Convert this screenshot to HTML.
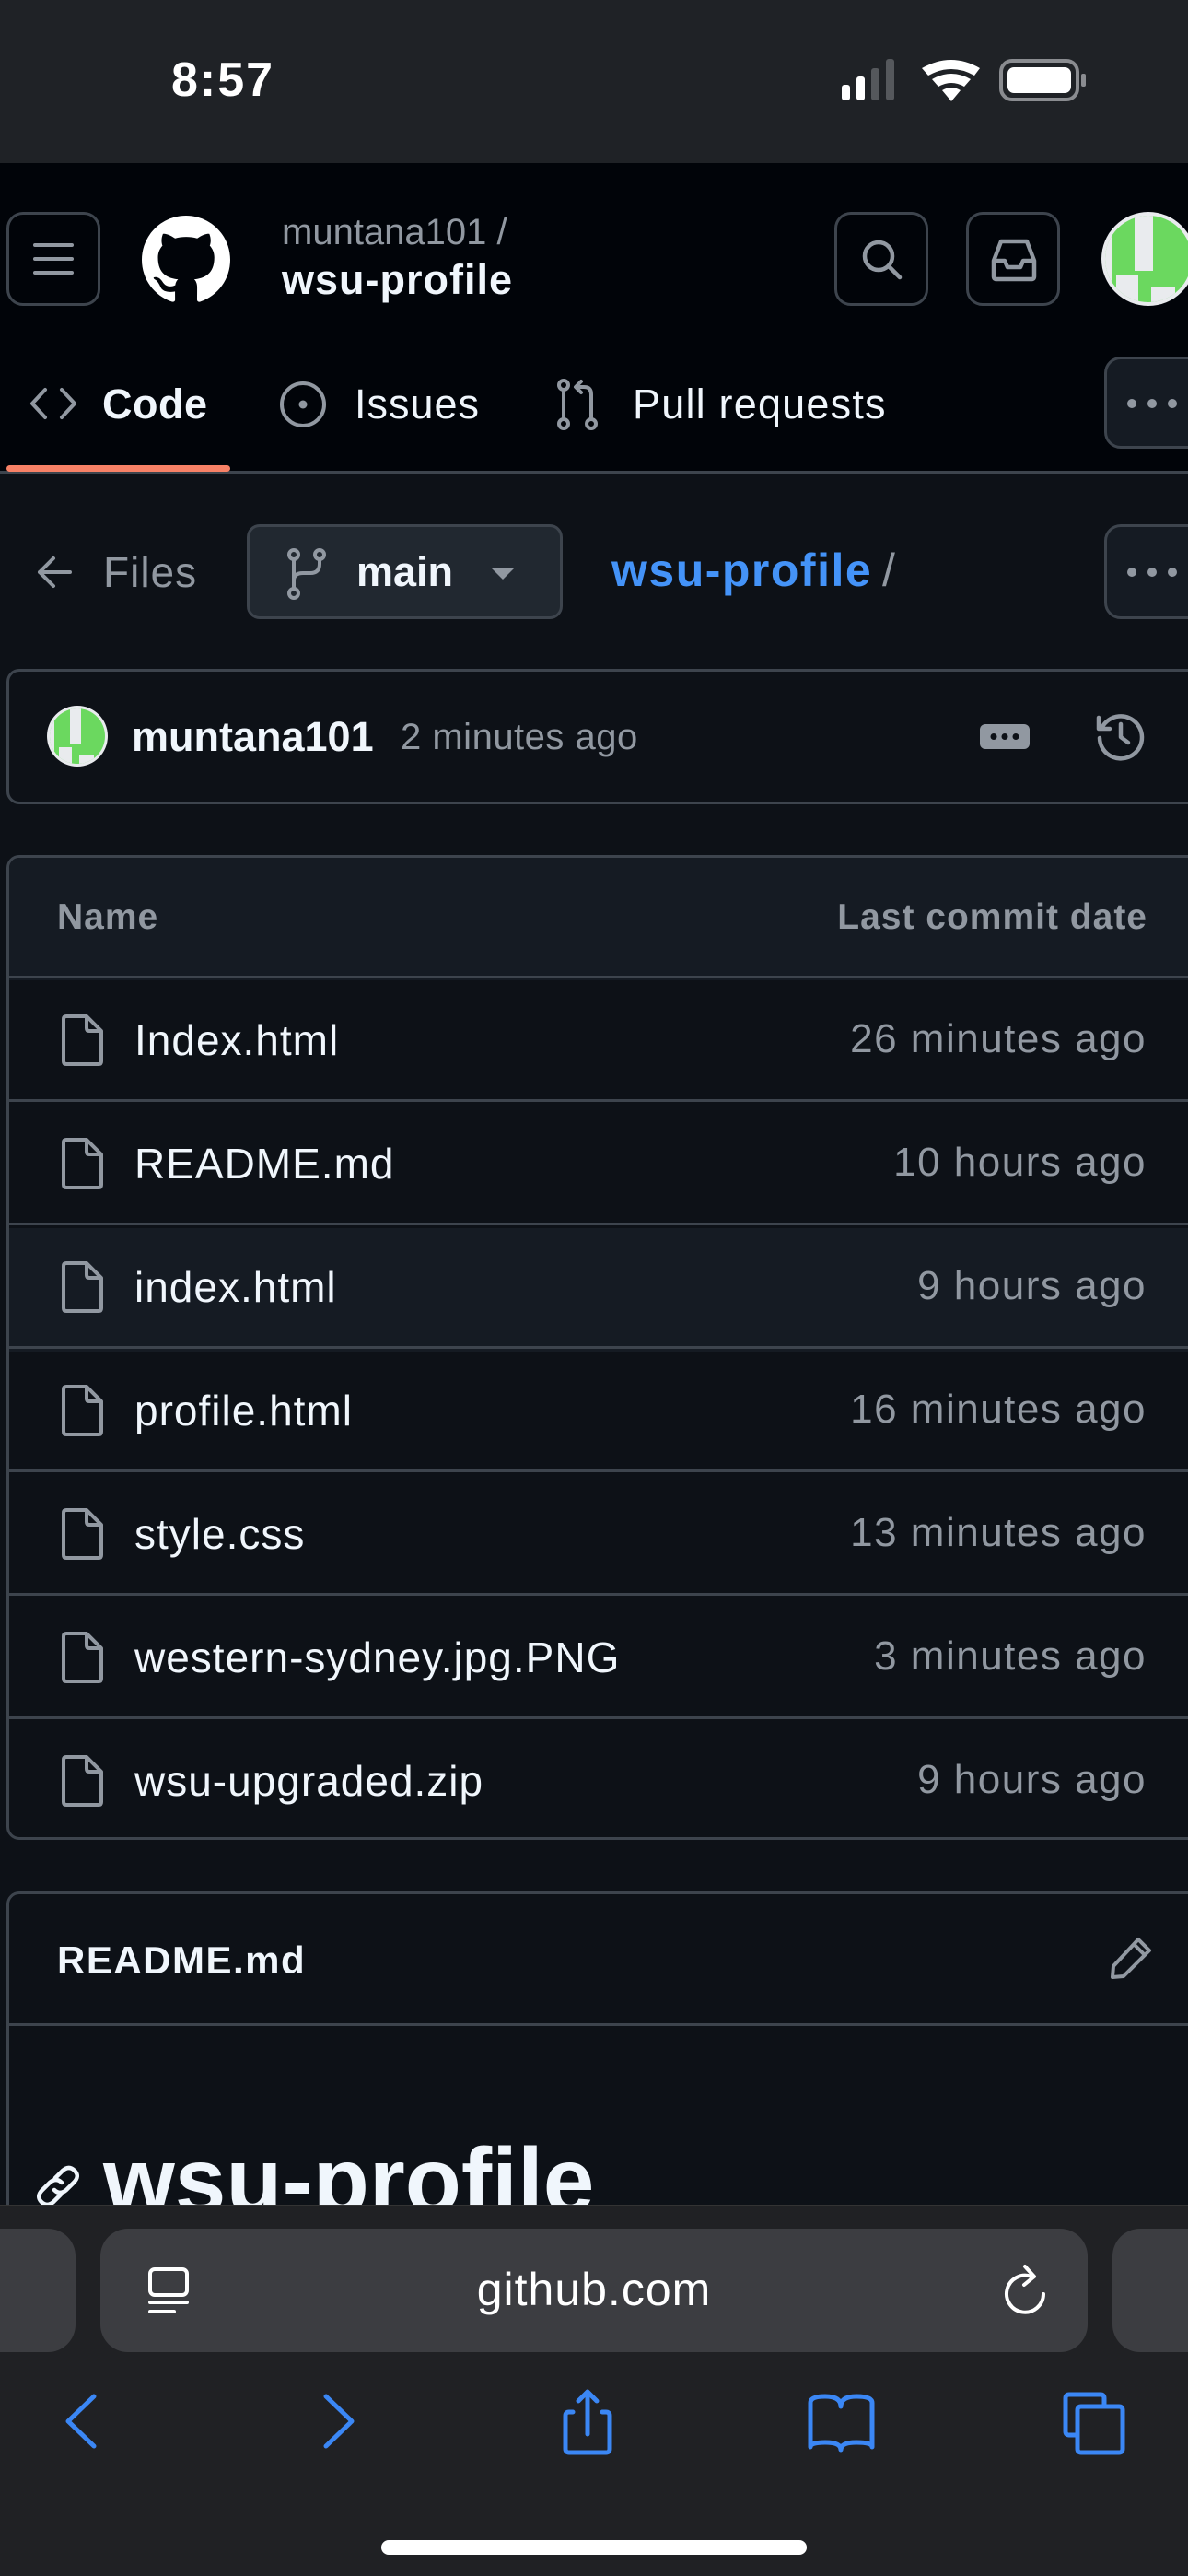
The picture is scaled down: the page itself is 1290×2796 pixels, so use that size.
<!DOCTYPE html>
<html><head><meta charset="utf-8">
<style>
*{margin:0;padding:0;box-sizing:border-box}
body{width:1290px;height:2796px;background:#0d1117;font-family:"Liberation Sans",sans-serif;color:#f0f6fc;position:relative;overflow:hidden}
.a{position:absolute}
.btn{position:absolute;border:3px solid #3d444d;border-radius:18px}
.row{position:absolute;left:7px;width:1290px;height:134px;border-top:3px solid #3d444d}
.fn{position:absolute;left:139px;top:40px;font-size:46px;letter-spacing:1px;color:#f0f6fc}
.dt{position:absolute;right:52px;top:41px;font-size:44px;letter-spacing:1.5px;color:#9198a1}
.fi{position:absolute;left:59px;top:38px}
</style></head><body>
<!-- status bar -->
<div class="a" style="left:0;top:0;width:1290px;height:177px;background:#1f2226"></div>
<div class="a" style="left:186px;top:57px;font-size:52px;letter-spacing:2px;font-weight:bold;color:#fff">8:57</div>
<svg class="a" style="left:912px;top:64px" width="270" height="46" viewBox="0 0 270 46">
<rect x="2" y="28" width="9" height="17" rx="3" fill="#fff"/>
<rect x="18" y="19" width="9" height="26" rx="3" fill="#fff"/>
<rect x="34" y="10" width="9" height="35" rx="3" fill="#55585c"/>
<rect x="50" y="0" width="9" height="45" rx="3" fill="#55585c"/>
<path d="M89 10 Q121 -8 152 10 L146 18 Q121 4 96 18Z M100 22 Q121 10 142 22 L135 30 Q121 22 107 30Z M111 34 Q121 28 131 34 L121 46Z" fill="#fff"/>
<rect x="175" y="2" width="83" height="42" rx="12" fill="none" stroke="#8a8c90" stroke-width="4"/>
<rect x="182" y="9" width="69" height="28" rx="7" fill="#fff"/>
<rect x="262" y="16" width="5" height="14" rx="2" fill="#8a8c90"/>
</svg>

<!-- header -->
<div class="a" style="left:0;top:177px;width:1290px;height:337px;background:#010409;border-bottom:3px solid #3d444d"></div>
<div class="btn" style="left:7px;top:230px;width:102px;height:102px">
<svg class="a" style="left:25px;top:29px" width="46" height="38"><rect x="1" y="2" width="44" height="4" rx="2" fill="#9198a1"/><rect x="1" y="17" width="44" height="4" rx="2" fill="#9198a1"/><rect x="1" y="32" width="44" height="4" rx="2" fill="#9198a1"/></svg>
</div>
<svg class="a" style="left:154px;top:234px" width="96" height="96" viewBox="0 0 16 16"><path fill="#fff" d="M8 0C3.580 0 0 3.58 0 8c0 3.54 2.29 6.530 5.47 7.59.4.07.55-.17.55-.38 0-.19-.01-.82-.01-1.49-2.01.37-2.530-.49-2.69-.94-.09-.23-.48-.94-.82-1.13-.28-.15-.68-.52-.01-.53.63-.01 1.08.58 1.23.82.72 1.21 1.87.87 2.33.66.07-.52.28-.87.51-1.07-1.78-.2-3.64-.89-3.64-3.95 0-.87.31-1.59.82-2.15-.08-.2-.36-1.02.08-2.12 0 0 .67-.21 2.2.82.64-.18 1.32-.27 2-.27.68 0 1.36.09 2 .27 1.53-1.04 2.2-.82 2.2-.82.44 1.1.16 1.92.08 2.12.51.56.82 1.27.82 2.15 0 3.07-1.87 3.75-3.65 3.95.29.25.54.73.54 1.48 0 1.07-.01 1.93-.01 2.2 0 .21.15.46.55.38A8.013 8.013 0 0016 8c0-4.42-3.58-8-8-8z"/></svg>
<div class="a" style="left:306px;top:230px;font-size:40px;color:#9198a1">muntana101 /</div>
<div class="a" style="left:306px;top:278px;font-size:45px;letter-spacing:1px;font-weight:bold;color:#f0f6fc">wsu-profile</div>
<div class="btn" style="left:906px;top:230px;width:102px;height:102px">
<svg class="a" style="left:24px;top:24px" width="50" height="50" viewBox="0 0 50 50"><circle cx="21" cy="21" r="15" fill="none" stroke="#9198a1" stroke-width="4.5"/><path d="M32 32 L44 44" stroke="#9198a1" stroke-width="4.5" stroke-linecap="round"/></svg>
</div>
<div class="btn" style="left:1049px;top:230px;width:102px;height:102px">
<svg class="a" style="left:23px;top:24px" width="52" height="50" viewBox="0 0 52 50"><path d="M12 5 H40 L48 26 V43 Q48 46 45 46 H7 Q4 46 4 43 V26 Z" fill="none" stroke="#9198a1" stroke-width="4.5" stroke-linejoin="round"/><path d="M4 26 H16 L19 33 H33 L36 26 H48" fill="none" stroke="#9198a1" stroke-width="4.5" stroke-linejoin="round"/></svg>
</div>
<svg class="a" style="left:1192px;top:228px" width="110" height="106" viewBox="0 0 110 106"><circle cx="55" cy="53" r="51" fill="#e9ebee"/><clipPath id="c1"><circle cx="55" cy="53" r="47"/></clipPath><g clip-path="url(#c1)"><rect x="0" y="0" width="110" height="106" fill="#6bd85f"/><rect x="0" y="0" width="16" height="106" fill="#e9ebee"/><rect x="40" y="0" width="20" height="66" fill="#e9ebee"/><rect x="20" y="70" width="24" height="40" fill="#e9ebee"/><rect x="58" y="84" width="26" height="26" fill="#e9ebee"/></g></svg>

<!-- tabs -->
<svg class="a" style="left:32px;top:420px" width="52" height="36" viewBox="0 0 52 36"><path d="M17 3 L3 18 L17 33 M35 3 L49 18 L35 33" fill="none" stroke="#9198a1" stroke-width="4" stroke-linecap="round" stroke-linejoin="round"/></svg>
<div class="a" style="left:111px;top:413px;font-size:45px;letter-spacing:0.5px;font-weight:bold">Code</div>
<svg class="a" style="left:302px;top:412px" width="54" height="54" viewBox="0 0 54 54"><circle cx="27" cy="27" r="23" fill="none" stroke="#9198a1" stroke-width="4"/><circle cx="27" cy="27" r="4.5" fill="#9198a1"/></svg>
<div class="a" style="left:385px;top:413px;font-size:45px;letter-spacing:1px">Issues</div>
<svg class="a" style="left:604px;top:410px" width="46" height="58" viewBox="0 0 46 58"><circle cx="8" cy="8" r="5" fill="none" stroke="#9198a1" stroke-width="4"/><circle cx="8" cy="50" r="5" fill="none" stroke="#9198a1" stroke-width="4"/><circle cx="38" cy="50" r="5" fill="none" stroke="#9198a1" stroke-width="4"/><path d="M8 13 V45 M38 45 V18 Q38 10 30 10 H22 M27 4 L21 10 L27 16" fill="none" stroke="#9198a1" stroke-width="4" stroke-linecap="round" stroke-linejoin="round"/></svg>
<div class="a" style="left:687px;top:413px;font-size:45px;letter-spacing:1.2px">Pull requests</div>
<div class="btn" style="left:1199px;top:387px;width:110px;height:100px;background:#151b23">
<svg class="a" style="left:20px;top:41px" width="60" height="14"><circle cx="7" cy="7" r="5" fill="#9198a1"/><circle cx="29" cy="7" r="5" fill="#9198a1"/><circle cx="51" cy="7" r="5" fill="#9198a1"/></svg>
</div>
<div class="a" style="left:7px;top:505px;width:243px;height:7px;border-radius:4px;background:#f78166"></div>

<!-- files row -->
<svg class="a" style="left:38px;top:602px" width="42" height="38" viewBox="0 0 42 38"><path d="M20 4 L5 19 L20 34 M5 19 H38" fill="none" stroke="#9198a1" stroke-width="4" stroke-linecap="round" stroke-linejoin="round"/></svg>
<div class="a" style="left:112px;top:594px;font-size:46px;letter-spacing:1px;color:#9198a1">Files</div>
<div class="btn" style="left:268px;top:569px;width:343px;height:103px;background:#212830;border-radius:14px">
<svg class="a" style="left:40px;top:22px" width="44" height="58" viewBox="0 0 44 58"><circle cx="8" cy="8" r="5" fill="none" stroke="#9198a1" stroke-width="4"/><circle cx="36" cy="8" r="5" fill="none" stroke="#9198a1" stroke-width="4"/><circle cx="8" cy="50" r="5" fill="none" stroke="#9198a1" stroke-width="4"/><path d="M8 13 V45 M36 13 V18 Q36 28 26 28 H18 Q8 28 8 36" fill="none" stroke="#9198a1" stroke-width="4"/></svg>
<div class="a" style="left:116px;top:23px;font-size:45px;font-weight:bold">main</div>
<svg class="a" style="left:262px;top:44px" width="26" height="14"><path d="M0 0 H26 L13 13Z" fill="#9198a1"/></svg>
</div>
<div class="a" style="left:664px;top:590px;font-size:50px;letter-spacing:1.5px;font-weight:bold;color:#4493f8">wsu-profile</div>
<div class="a" style="left:958px;top:590px;font-size:50px;color:#9198a1">/</div>
<div class="btn" style="left:1199px;top:569px;width:110px;height:103px;background:#151b23">
<svg class="a" style="left:20px;top:42px" width="60" height="14"><circle cx="7" cy="7" r="5" fill="#9198a1"/><circle cx="29" cy="7" r="5" fill="#9198a1"/><circle cx="51" cy="7" r="5" fill="#9198a1"/></svg>
</div>

<!-- commit box -->
<div class="btn" style="left:7px;top:726px;width:1300px;height:147px;border-radius:14px"></div>
<svg class="a" style="left:50px;top:765px" width="68" height="68" viewBox="0 0 68 68"><circle cx="34" cy="34" r="33" fill="#e9ebee"/><clipPath id="c2"><circle cx="34" cy="34" r="30"/></clipPath><g clip-path="url(#c2)"><rect width="68" height="68" fill="#6bd85f"/><rect x="0" y="0" width="9" height="68" fill="#e9ebee"/><rect x="26" y="0" width="12" height="42" fill="#e9ebee"/><rect x="14" y="46" width="14" height="24" fill="#e9ebee"/><rect x="36" y="54" width="16" height="16" fill="#e9ebee"/></g></svg>
<div class="a" style="left:143px;top:774px;font-size:45px;font-weight:bold">muntana101</div>
<div class="a" style="left:435px;top:778px;font-size:40px;letter-spacing:0.5px;color:#9198a1">2 minutes ago</div>
<svg class="a" style="left:1064px;top:786px" width="54" height="27"><rect width="54" height="27" rx="6" fill="#9198a1"/><circle cx="15" cy="13.5" r="3.5" fill="#0d1117"/><circle cx="27" cy="13.5" r="3.5" fill="#0d1117"/><circle cx="39" cy="13.5" r="3.5" fill="#0d1117"/></svg>
<svg class="a" style="left:1189px;top:771px" width="56" height="56" viewBox="0 0 56 56"><path d="M8 18 A23 23 0 1 1 5 30" fill="none" stroke="#9198a1" stroke-width="4.5" stroke-linecap="round"/><path d="M4 8 V20 H16" fill="none" stroke="#9198a1" stroke-width="4.5" stroke-linecap="round" stroke-linejoin="round"/><path d="M28 15 V29 L36 35" fill="none" stroke="#9198a1" stroke-width="4.5" stroke-linecap="round" stroke-linejoin="round"/></svg>

<!-- file table -->
<div class="btn" style="left:7px;top:928px;width:1300px;height:1069px;border-radius:14px;overflow:hidden">
<div class="a" style="left:0;top:0;width:1300px;height:133px;background:#151b23"></div>
<div class="a" style="left:0;top:402px;width:1300px;height:134px;background:#151b23"></div>
</div>
<div class="a" style="left:62px;top:974px;font-size:39px;letter-spacing:1px;font-weight:bold;color:#9198a1">Name</div>
<div class="a" style="right:44px;top:974px;font-size:39px;letter-spacing:1px;font-weight:bold;color:#9198a1">Last commit date</div>

<div class="row" style="top:1059px"><svg class="fi" width="48" height="58" viewBox="0 0 48 58"><path d="M6 3 H28 L44 19 V52 Q44 55 41 55 H6 Q3 55 3 52 V6 Q3 3 6 3Z M28 3 V16 Q28 19 31 19 H44" fill="none" stroke="#9198a1" stroke-width="4" stroke-linejoin="round"/></svg><div class="fn">Index.html</div><div class="dt">26 minutes ago</div></div>
<div class="row" style="top:1193px"><svg class="fi" width="48" height="58" viewBox="0 0 48 58"><path d="M6 3 H28 L44 19 V52 Q44 55 41 55 H6 Q3 55 3 52 V6 Q3 3 6 3Z M28 3 V16 Q28 19 31 19 H44" fill="none" stroke="#9198a1" stroke-width="4" stroke-linejoin="round"/></svg><div class="fn">README.md</div><div class="dt">10 hours ago</div></div>
<div class="row" style="top:1327px"><svg class="fi" width="48" height="58" viewBox="0 0 48 58"><path d="M6 3 H28 L44 19 V52 Q44 55 41 55 H6 Q3 55 3 52 V6 Q3 3 6 3Z M28 3 V16 Q28 19 31 19 H44" fill="none" stroke="#9198a1" stroke-width="4" stroke-linejoin="round"/></svg><div class="fn">index.html</div><div class="dt">9 hours ago</div></div>
<div class="row" style="top:1461px"><svg class="fi" width="48" height="58" viewBox="0 0 48 58"><path d="M6 3 H28 L44 19 V52 Q44 55 41 55 H6 Q3 55 3 52 V6 Q3 3 6 3Z M28 3 V16 Q28 19 31 19 H44" fill="none" stroke="#9198a1" stroke-width="4" stroke-linejoin="round"/></svg><div class="fn">profile.html</div><div class="dt">16 minutes ago</div></div>
<div class="row" style="top:1595px"><svg class="fi" width="48" height="58" viewBox="0 0 48 58"><path d="M6 3 H28 L44 19 V52 Q44 55 41 55 H6 Q3 55 3 52 V6 Q3 3 6 3Z M28 3 V16 Q28 19 31 19 H44" fill="none" stroke="#9198a1" stroke-width="4" stroke-linejoin="round"/></svg><div class="fn">style.css</div><div class="dt">13 minutes ago</div></div>
<div class="row" style="top:1729px"><svg class="fi" width="48" height="58" viewBox="0 0 48 58"><path d="M6 3 H28 L44 19 V52 Q44 55 41 55 H6 Q3 55 3 52 V6 Q3 3 6 3Z M28 3 V16 Q28 19 31 19 H44" fill="none" stroke="#9198a1" stroke-width="4" stroke-linejoin="round"/></svg><div class="fn">western-sydney.jpg.PNG</div><div class="dt">3 minutes ago</div></div>
<div class="row" style="top:1863px"><svg class="fi" width="48" height="58" viewBox="0 0 48 58"><path d="M6 3 H28 L44 19 V52 Q44 55 41 55 H6 Q3 55 3 52 V6 Q3 3 6 3Z M28 3 V16 Q28 19 31 19 H44" fill="none" stroke="#9198a1" stroke-width="4" stroke-linejoin="round"/></svg><div class="fn">wsu-upgraded.zip</div><div class="dt">9 hours ago</div></div>

<!-- readme -->
<div class="btn" style="left:7px;top:2053px;width:1300px;height:500px;border-radius:14px"></div>
<div class="a" style="left:10px;top:2196px;width:1290px;height:3px;background:#3d444d"></div>
<div class="a" style="left:62px;top:2104px;font-size:42px;letter-spacing:1.5px;font-weight:bold">README.md</div>
<svg class="a" style="left:1203px;top:2100px" width="50" height="50" viewBox="0 0 50 50"><path d="M33 5 L45 17 L17 45 L5 46 L6 34 Z M28 10 L40 22" fill="none" stroke="#9198a1" stroke-width="4" stroke-linejoin="round"/></svg>
<svg class="a" style="left:38px;top:2348px" width="50" height="50" viewBox="0 0 50 50"><path d="M22 16 L30 8 Q37 2 43 8 Q49 14 42 21 L34 29 Q27 35 21 29 M28 34 L20 42 Q13 48 7 42 Q1 36 8 29 L16 21 Q23 15 29 21" fill="none" stroke="#f0f6fc" stroke-width="4.5" stroke-linecap="round"/></svg>
<div class="a" style="left:112px;top:2310px;font-size:100px;font-weight:bold;color:#f0f6fc">wsu-profile</div>

<!-- safari -->
<div class="a" style="left:0;top:2393px;width:1290px;height:403px;background:#202124;border-top:1px solid #333"></div>
<div class="a" style="left:-40px;top:2419px;width:122px;height:134px;border-radius:30px;background:#3c3d41"></div>
<div class="a" style="left:109px;top:2419px;width:1072px;height:134px;border-radius:30px;background:#3c3d41"></div>
<div class="a" style="left:1208px;top:2419px;width:140px;height:134px;border-radius:30px;background:#3c3d41"></div>
<svg class="a" style="left:160px;top:2460px" width="48" height="54" viewBox="0 0 48 54"><rect x="3" y="3" width="40" height="28" rx="5" fill="none" stroke="#fff" stroke-width="4"/><rect x="1" y="37" width="44" height="4" rx="2" fill="#fff"/><rect x="1" y="47" width="30" height="4" rx="2" fill="#fff"/></svg>
<div class="a" style="left:0;top:2456px;width:1290px;text-align:center;font-size:50px;letter-spacing:1px;color:#fff">github.com</div>
<svg class="a" style="left:1090px;top:2456px" width="50" height="62" viewBox="0 0 50 62"><path d="M30 15 A20 20 0 1 0 43 34" fill="none" stroke="#fff" stroke-width="4" stroke-linecap="round"/><path d="M23 4 L33 15 L22 24" fill="none" stroke="#fff" stroke-width="4" stroke-linecap="round" stroke-linejoin="round"/></svg>
<svg class="a" style="left:0;top:2580px" width="1290" height="100"><g fill="none" stroke="#3b87f5" stroke-width="5" stroke-linecap="round" stroke-linejoin="round">
<path d="M102 21 L74 48 L102 75"/>
<path d="M354 21 L382 48 L354 75"/>
<path d="M622 38 H618 Q614 38 614 42 V78 Q614 82 618 82 H658 Q662 82 662 78 V42 Q662 38 658 38 H654 M638 62 V16 M628 26 L638 16 L648 26"/>
<path d="M880 76 V28 Q880 21 896 21 Q913 21 913 32 Q913 21 930 21 Q947 21 947 28 V76 Q947 71 930 71 Q913 71 913 79 Q913 71 896 71 Q880 71 880 76Z"/>
<path d="M1170 63 H1161 Q1157 63 1157 59 V23 Q1157 19 1161 19 H1195 Q1199 19 1199 23 V32 M1174 32 H1215 Q1219 32 1219 36 V78 Q1219 82 1215 82 H1174 Q1170 82 1170 78 V36 Q1170 32 1174 32Z"/>
</g></svg>
<div class="a" style="left:414px;top:2757px;width:462px;height:16px;border-radius:8px;background:#fff"></div>
</body></html>
